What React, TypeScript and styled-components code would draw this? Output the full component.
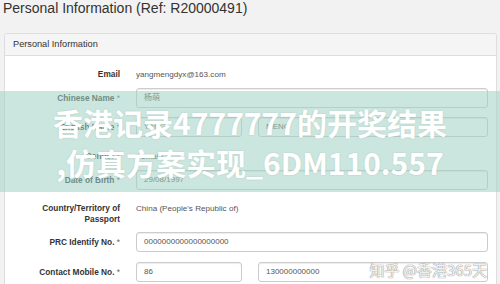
import styled, { createGlobalStyle } from "styled-components";

const GlobalStyle = createGlobalStyle`
  html, body {
    margin: 0;
    padding: 0;
    height: 284px;
    overflow: hidden;
    background: #f2f2f2;
    font-family: "Liberation Sans", Arial, sans-serif;
  }
`;

const Page = styled.div`
  position: relative;
  width: 500px;
  height: 284px;
  overflow: hidden;
`;

const Title = styled.h2`
  margin: 0 0 17px 3px;
  font-size: 14px;
  line-height: 16px;
  font-weight: normal;
  color: #333;
  white-space: nowrap;
`;

const Panel = styled.section`
  margin: 0 3px 0 4px;
  background: #fff;
  border: 1px solid #ddd;
  border-radius: 3px;
`;

const PanelHeading = styled.div`
  height: 21px;
  line-height: 21px;
  padding: 0 8px;
  background: #f5f5f5;
  border-bottom: 1px solid #ddd;
  border-radius: 3px 3px 0 0;
  font-size: 9.2px;
  color: #333;
`;

const PanelBody = styled.div`
  padding: 8px 8px 0 0;
`;

const Row = styled.div<{ $mb: number }>`
  display: grid;
  grid-template-columns: 115px 1fr;
  column-gap: 16px;
  align-items: center;
  min-height: 20px;
  margin-bottom: ${(p) => p.$mb}px;
`;

const Label = styled.label`
  text-align: right;
  font-size: 8.3px;
  line-height: 11px;
  font-weight: bold;
  color: #333;
`;

const Star = styled.span`
  font-weight: normal;
  color: #666;
`;

const Static = styled.div<{ $top?: boolean }>`
  align-self: ${(p) => (p.$top ? "start" : "center")};
  font-size: 8.1px;
  line-height: 11px;
  color: #555;
`;

const Inputs = styled.div<{ $split?: boolean }>`
  display: grid;
  grid-template-columns: ${(p) => (p.$split ? "106px 1fr" : "1fr")};
  column-gap: 16px;
`;

const Input = styled.div`
  height: 18px;
  line-height: 18px;
  padding: 0 7px;
  border: 1px solid #ccc;
  border-radius: 3px;
  background: #fff;
  box-shadow: inset 0 1px 1px rgba(0, 0, 0, 0.075);
  font-size: 8px;
  color: #555;
  font-family: "Liberation Sans", "Noto Sans CJK SC", sans-serif;
`;

const Band = styled.div`
  position: absolute;
  left: 0;
  right: 0;
  top: 91px;
  height: 101px;
  padding-top: 11px;
  box-sizing: border-box;
  background: rgba(160, 210, 195, 0.55);
  text-align: center;
  font-family: "Noto Sans CJK SC", "Noto Sans", sans-serif;
  font-weight: 700;
  font-size: 30px;
  line-height: 40px;
  color: #fff;
  text-shadow: 0 0 2px rgba(0, 0, 0, 0.12);
  white-space: nowrap;
`;

const Credit = styled.div`
  position: absolute;
  right: 13px;
  top: 260px;
  font-family: "Noto Sans CJK SC", sans-serif;
  font-size: 15px;
  line-height: 20px;
  color: rgba(255, 255, 255, 0.9);
  text-shadow: 0 0 1px #888, 0 0 1px #888;
  white-space: nowrap;
`;

const req = (text: string) => (
  <>
    {text} <Star>*</Star>
  </>
);

export default function App() {
  return (
    <Page>
      <GlobalStyle />
      <Title>Personal Information (Ref: R20000491)</Title>
      <Panel>
        <PanelHeading>Personal Information</PanelHeading>
        <PanelBody>
          <Row $mb={4}>
            <Label>Email</Label>
            <Static>yangmengdyx@163.com</Static>
          </Row>
          <Row $mb={9}>
            <Label>{req("Chinese Name")}</Label>
            <Inputs>
              <Input>杨萌</Input>
            </Inputs>
          </Row>
          <Row $mb={9}>
            <Label>{req("English Name")}</Label>
            <Inputs $split>
              <Input>YANG</Input>
              <Input>MENG</Input>
            </Inputs>
          </Row>
          <Row $mb={4}>
            <Label>{req("Gender")}</Label>
            <Static>Female</Static>
          </Row>
          <Row $mb={9}>
            <Label>{req("Date of Birth")}</Label>
            <Inputs>
              <Input>29/08/1997</Input>
            </Inputs>
          </Row>
          <Row $mb={7} style={{ paddingTop: 4 }}>
            <Label>
              Country/Territory of
              <br />
              Passport
            </Label>
            <Static $top>China (People's Republic of)</Static>
          </Row>
          <Row $mb={10}>
            <Label>{req("PRC Identify No.")}</Label>
            <Inputs>
              <Input>0000000000000000000</Input>
            </Inputs>
          </Row>
          <Row $mb={10}>
            <Label>{req("Contact Mobile No.")}</Label>
            <Inputs $split>
              <Input>86</Input>
              <Input>130000000000</Input>
            </Inputs>
          </Row>
        </PanelBody>
      </Panel>
      <Band>
        <div>香港记录4777777的开奖结果</div>
        <div>,仿真方案实现_6DM110.557</div>
      </Band>
      <Credit>知乎 @香港365天</Credit>
    </Page>
  );
}
